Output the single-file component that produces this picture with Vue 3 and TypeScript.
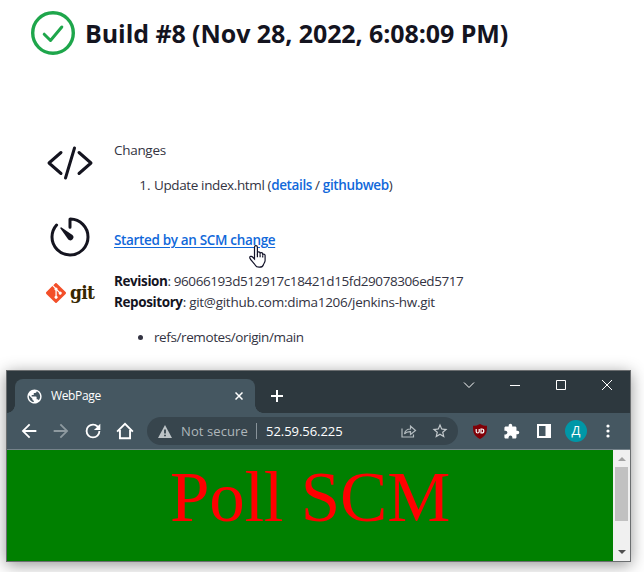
<script setup lang="ts">
import { ref } from 'vue'

const title = 'Build #8 (Nov 28, 2022, 6:08:09 PM)'
const commits = ref([{ message: 'Update index.html' }])
const revision = '96066193d512917c18421d15fd29078306ed5717'
const repository = 'git@github.com:dima1206/jenkins-hw.git'
const branches = ['refs/remotes/origin/main']
const address = '52.59.56.225'
</script>

<template>
  <main class="page">
    <header class="build">
      <svg class="status" viewBox="0 0 44 44">
        <circle cx="22" cy="22" r="20.3" />
        <path d="M13.2 23.2l6.3 6.3L30.8 16" />
      </svg>
      <h1>{{ title }}</h1>
    </header>

    <section class="row changes">
      <svg class="icon line" viewBox="0 0 512 512">
        <path d="M160 368L32 256l128-112M352 368l128-112-128-112M304 96l-96 320" />
      </svg>
      <div class="text">
        <div class="label">Changes</div>
        <ol>
          <li v-for="c in commits" :key="c.message">
            <span class="commit">{{ c.message }} (<a class="link">details</a> / <a class="link">githubweb</a>)</span>
          </li>
        </ol>
      </div>
    </section>

    <section class="row cause">
      <svg class="icon line" viewBox="0 0 512 512">
        <path d="M112.91 128A191.85 191.85 0 0064 254c-1.18 106.35 85.65 193.8 192 194 106.2.2 192-85.83 192-192 0-104.54-83.55-189.61-187.5-192a4.36 4.36 0 00-4.5 4.37V152" />
        <path class="needle" d="M233.38 278.63l-79-113a8.13 8.13 0 0111.32-11.32l113 79a32.5 32.5 0 01-37.25 53.26 33.21 33.21 0 01-8.07-7.94z" />
      </svg>
      <div class="text"><a class="link started">Started by an SCM change</a></div>
      <svg class="cursor" viewBox="0 0 17 23">
        <path d="M5.5 14V2.2C5.5.2 8.4.2 8.4 2.2V9.500V7.800C8.400 6.500 11.100 6.500 11.100 7.900V9.500V8.500C11.100 7.300 13.700 7.400 13.700 8.900V10.500V9.800C13.700 8.700 16.100 8.900 16.100 10.500V15.500C16.100 17.500 14.500 18.500 14.300 20C13.500 22.800 7.500 22.800 6.500 20.500C5.500 18.500 1.500 15 .8 13C.4 11.300 2.600 10.800 3.600 12Z" />
        <path d="M8.400 9v3.200M11.100 9.500v2.700M13.700 10.500v2" />
      </svg>
    </section>

    <section class="row scm">
      <div class="git">
        <svg viewBox="0 0 92 92"><path d="M90.156 41.965 50.036 1.848a5.918 5.918 0 0 0-8.372 0l-8.328 8.332 10.566 10.566a7.03 7.03 0 0 1 7.23 1.684 7.034 7.034 0 0 1 1.669 7.277l10.187 10.184a7.028 7.028 0 0 1 7.278 1.672 7.04 7.04 0 0 1 0 9.957 7.05 7.05 0 0 1-9.965 0 7.044 7.044 0 0 1-1.528-7.66l-9.5-9.497V59.36a7.04 7.04 0 0 1 1.86 11.29 7.04 7.04 0 0 1-9.957 0 7.04 7.04 0 0 1 0-9.958 7.06 7.06 0 0 1 2.304-1.539V33.926a7.049 7.049 0 0 1-3.82-9.234L29.242 14.272 1.73 41.777a5.925 5.925 0 0 0 0 8.371L41.852 90.27a5.925 5.925 0 0 0 8.37 0l39.934-39.934a5.925 5.925 0 0 0 0-8.371" /></svg>
        <span>git</span>
      </div>
      <div class="text">
        <div><b class="rev-label">Revision</b><span class="rev">: {{ revision }}</span></div>
        <div><b class="repo-label">Repository</b><span class="repo">: {{ repository }}</span></div>
        <ul>
          <li v-for="b in branches" :key="b"><span class="branch">{{ b }}</span></li>
        </ul>
      </div>
    </section>

    <section class="window">
      <div class="titlebar">
        <div class="tab">
          <svg class="globe" viewBox="0 0 24 24"><path d="M12 2C6.480 2 2 6.480 2 12s4.480 10 10 10 10-4.480 10-10S17.520 2 12 2z" /><path class="land" d="M11 19.930c-3.950-.49-7-3.850-7-7.930 0-.62.08-1.210.21-1.790L9 15v1c0 1.100.9 2 2 2v1.930zM17.900 17.390c-.26-.81-1-1.390-1.900-1.390h-1v-3c0-.55-.45-1-1-1H8v-2h2c.55 0 1-.45 1-1V7h2c1.100 0 2-.9 2-2v-.41c2.930 1.190 5 4.060 5 7.410 0 2.080-.8 3.970-2.100 5.390z" /></svg>
          <span class="tab-title">WebPage</span>
          <svg class="tab-close" viewBox="0 0 8 8"><path d="M.5.5l7 7M7.500.5l-7 7" /></svg>
        </div>
        <svg class="plus" viewBox="0 0 12 12"><path d="M6 0v12M0 6h12" /></svg>
        <div class="controls">
          <svg viewBox="0 0 12 12"><path d="M1 3.500l5 5 5-5" /></svg>
          <svg viewBox="0 0 12 12"><path d="M1 6.500h10" /></svg>
          <svg viewBox="0 0 12 12"><path d="M1.500 1.500h9v9h-9z" /></svg>
          <svg viewBox="0 0 12 12"><path d="M1 1l10 10M11 1L1 11" /></svg>
        </div>
      </div>

      <div class="toolbar">
        <svg class="nav" viewBox="0 0 24 24"><path d="M20 11H7.830l5.590-5.590L12 4l-8 8 8 8 1.410-1.410L7.830 13H20v-2z" /></svg>
        <svg class="nav dim" viewBox="0 0 24 24"><path d="M12 4l-1.410 1.410L16.170 11H4v2h12.170l-5.580 5.590L12 20l8-8z" /></svg>
        <svg class="nav" viewBox="0 0 24 24"><path d="M17.650 6.350A7.958 7.958 0 0012 4a8 8 0 108 8h-2a6 6 0 11-6-6c1.660 0 3.140.69 4.220 1.780L13 11h7V4l-2.350 2.350z" /></svg>
        <svg class="nav home" viewBox="0 0 16 16"><path d="M1 8.500L8 1.700l7 6.800M3.500 7v7.500h9V7" /></svg>
        <div class="omnibox">
          <svg class="warn" viewBox="0 0 14 13"><path d="M7 0l7 13H0z" /><path class="bang" d="M6.100 4.500h1.800v4H6.100zM6.100 9.700h1.800v1.600H6.100z" /></svg>
          <span class="insecure">Not secure</span>
          <i class="divider"></i>
          <span class="url">{{ address }}</span>
          <svg class="share" viewBox="0 0 16 14"><path d="M1 4.500V13h11.500v-2.500M3.500 10c.6-3.700 2.800-5 6-5V2l5 4.500-5 4V7.700C7 7.600 5 8 3.500 10z" /></svg>
          <svg class="star" viewBox="0 0 24 24"><path d="M22 9.240l-7.190-.62L12 2 9.190 8.630 2 9.240l5.460 4.730L5.820 21 12 17.270 18.180 21l-1.630-7.030L22 9.240zM12 15.400l-3.760 2.270 1-4.280-3.320-2.880 4.380-.38L12 6.100l1.710 4.040 4.380.38-3.320 2.880 1 4.280L12 15.400z" /></svg>
        </div>
        <svg class="shield" viewBox="0 0 14 15"><path d="M7 0c2 1.400 4.500 1.800 7 1.800 0 6.500-.5 9.800-7 13.200C.5 11.600 0 8.300 0 1.800 2.500 1.800 5 1.400 7 0z" /><path class="mark" d="M3.200 5v2.500q0 1.500 1.500 1.500t1.500-1.500V5M8 5v4h.8q2 0 2-2t-2-2z" /></svg>
        <svg class="puzzle" viewBox="0 0 24 24"><path d="M20.500 11H19V7c0-1.100-.9-2-2-2h-4V3.500a2.500 2.500 0 00-5 0V5H4c-1.100 0-1.990.9-1.990 2v3.800H3.500c1.490 0 2.700 1.210 2.700 2.700s-1.210 2.700-2.700 2.700H2V20c0 1.100.9 2 2 2h3.800v-1.500c0-1.490 1.210-2.700 2.700-2.700 1.490 0 2.700 1.210 2.700 2.700V22H17c1.100 0 2-.9 2-2v-4h1.500a2.500 2.500 0 000-5z" /></svg>
        <svg class="panel" viewBox="0 0 14 14"><path d="M0 0h14v14H0zM2 2v10h6.500V2z" fill-rule="evenodd" /></svg>
        <span class="avatar">Д</span>
        <svg class="dots" viewBox="0 0 4 14"><circle cx="2" cy="2" r="1.600" /><circle cx="2" cy="7" r="1.600" /><circle cx="2" cy="12" r="1.600" /></svg>
      </div>

      <div class="viewport">
        <div class="content"><span>Poll SCM</span></div>
        <div class="scrollbar">
          <svg viewBox="0 0 8 4"><path d="M0 4l4-4 4 4z" /></svg>
          <i class="thumb"></i>
          <svg class="down" viewBox="0 0 8 4"><path d="M0 0l4 4 4-4z" /></svg>
        </div>
      </div>
    </section>
  </main>
</template>

<style>
body { background: #fff; overflow: hidden; }
</style>

<style scoped>
* { box-sizing: border-box; }
.page {
  width: 644px;
  height: 572px;
  overflow: hidden;
  padding-top: 11px;
  font: 13.5px/21px "Open Sans", "Noto Sans", sans-serif;
  color: #333342;
  white-space: nowrap;
}
svg { display: block; flex: none; }
.build { display: flex; align-items: center; height: 44px; padding-left: 31px; }
.status { width: 44px; height: 44px; fill: none; stroke: #1ea64b; stroke-width: 3.4; stroke-linecap: round; stroke-linejoin: round; }
.status path { stroke-width: 3; }
h1 { margin: 0 0 0 10px; font-size: 25px; line-height: 36px; font-weight: 700; letter-spacing: -0.07px; color: #14141f; }
.row { display: flex; padding-left: 46px; position: relative; }
.changes { margin-top: 84px; height: 74px; }
.cause { height: 56px; }
.scm { height: 101px; }
.icon { width: 48px; height: 48px; }
.line { fill: none; stroke: #14141f; stroke-width: 32; stroke-linecap: round; stroke-linejoin: round; }
.needle { fill: #14141f; stroke: none; }
.text { margin-left: 20px; }
.changes .text { padding-top: 1px; }
.cause .text { padding-top: 17px; }
.scm .text { padding-top: 2px; }
ol, ul { margin: 14px 0 0; padding-left: 40px; }
.label { letter-spacing: -0.3px; }
.commit { letter-spacing: -0.38px; }
.link { color: #1068da; font-weight: 600; }
.started { text-decoration: underline; text-underline-offset: 2px; letter-spacing: -0.34px; }
.cursor { position: absolute; left: 249px; top: 32px; width: 17px; height: 23px; fill: #fff; stroke: #14142a; stroke-width: 1.2; }
b { color: #14141f; font-weight: 700; letter-spacing: -0.4px; }
.rev { letter-spacing: -0.42px; }
.repo { letter-spacing: -0.28px; }
.branch { letter-spacing: -0.4px; }
.git { display: flex; align-items: center; width: 48px; height: 48px; }
.git svg { width: 20px; height: 20px; fill: #f34f29; }
.git span { margin: -3px 0 0 4px; font: 700 19px/24px "DejaVu Serif", serif; font-stretch: condensed; letter-spacing: -0.7px; color: #362701; }

.window {
  width: 625px;
  height: 192px;
  margin-left: 6px;
  border: 1px solid #6b6e70;
  box-shadow: 0 3px 15px rgba(0, 0, 0, 0.42);
  position: relative;
}
.titlebar { display: flex; height: 42px; background: #2d383e; padding-left: 8px; }
.tab { display: flex; align-items: center; position: relative; width: 240px; height: 34px; margin-top: 8px; padding: 0 12px 0 13px; background: #455761; border-radius: 8px 8px 0 0; }
.tab::before, .tab::after { content: ""; position: absolute; bottom: 0; width: 8px; height: 8px; }
.tab::before { left: -8px; background: radial-gradient(circle at 0 0, #2d383e 7.500px, #455761 8px); }
.tab::after { right: -8px; background: radial-gradient(circle at 100% 0, #2d383e 7.500px, #455761 8px); }
.globe { width: 17px; height: 17px; fill: #fff; margin-left: -2px; }
.globe .land { fill: #455761; }
.tab-title { margin-left: 8px; font-size: 12px; letter-spacing: -0.35px; line-height: 20px; padding-bottom: 1px; color: #fff; flex: 1; }
.tab-close { width: 8px; height: 8px; margin-right: 0; stroke: #fff; stroke-width: 1.5; }
.plus { width: 12px; height: 12px; margin: 19px 0 0 16px; stroke: #fff; stroke-width: 2; }
.controls { display: flex; gap: 34px; margin: 8px 0 0 auto; padding-right: 17px; }
.controls svg { width: 12px; height: 12px; fill: none; stroke: #fff; stroke-width: 1; }
.toolbar { display: flex; align-items: center; height: 37px; padding-left: 11px; background: #455761; border-bottom: 1px solid #75828a; }
.nav { width: 22px; height: 22px; margin-right: 10px; fill: #fff; }
.dim { fill: #8e9aa0; }
.home { width: 18px; height: 18px; margin: 0 13px 0 2px; fill: none; stroke: #fff; stroke-width: 1.700; }
.omnibox { display: flex; align-items: center; width: 311px; height: 28px; padding-left: 11px; border-radius: 14px; background: #37454d; }
.warn { width: 14px; height: 13px; fill: #bcc3c6; }
.bang { fill: #37454d; }
.insecure { width: 75px; margin-left: 9px; color: #afb7bb; letter-spacing: 0.1px; font-size: 13px; }
.divider { width: 1px; height: 16px; background: #88939a; }
.url { width: 135px; margin-left: 9px; color: #fff; font-size: 13px; letter-spacing: -0.05px; }
.share { width: 16px; height: 14px; fill: none; stroke: #b4bcc0; stroke-width: 1.200; }
.star { width: 18px; height: 18px; margin-left: 14px; fill: #c4cacd; }
.shield { width: 14px; height: 15px; margin-left: 15px; fill: #800007; }
.mark { fill: none; stroke: #fff; stroke-width: 1.200; }
.puzzle { width: 17px; height: 17px; margin-left: 16px; fill: #fff; }
.panel { width: 14px; height: 14px; margin-left: 17px; fill: #fff; }
.avatar { width: 22px; height: 22px; margin-left: 14px; border-radius: 50%; background: #0097a7; color: #fff; font-size: 13px; line-height: 21px; text-align: center; }
.dots { width: 4px; height: 14px; margin-left: 19px; fill: #fff; }
.viewport { display: flex; height: 111px; }
.content { flex: 1; background: #008000; color: #f00; text-align: center; font: 71px/82px "Liberation Serif", serif; letter-spacing: -0.25px; padding-top: 6px; }
.scrollbar { display: flex; flex-direction: column; align-items: center; width: 17px; padding-top: 7px; background: #f0f0f0; }
.scrollbar svg { width: 8px; height: 4px; fill: #a3a3a3; }
.thumb { width: 13px; height: 54px; margin: 6px 0 29px; background: #c1c1c1; }
.scrollbar .down { fill: #505050; }
</style>
